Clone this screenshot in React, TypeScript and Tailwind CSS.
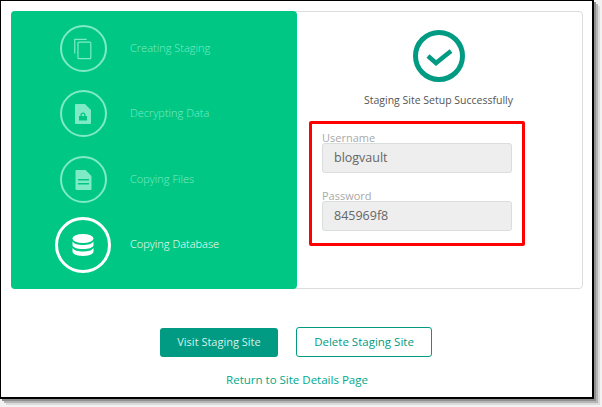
const steps = [
  { label: "Creating Staging", icon: "copy" },
  { label: "Decrypting Data", icon: "lock" },
  { label: "Copying Files", icon: "file" },
  { label: "Copying Database", icon: "database" },
];

function StepIcon({ icon }: { icon: string }) {
  if (icon === "copy") {
    return (
      <svg viewBox="0 0 24 24" className="h-[22px] w-[22px]" fill="none" stroke="currentColor" strokeWidth="1.3">
        <rect x="6.5" y="4.5" width="14" height="18" rx="1" />
        <path d="M3 17V1.5h13" />
      </svg>
    );
  }
  if (icon === "lock") {
    return (
      <svg viewBox="0 0 16 20" className="h-[20px] w-[16px]" fill="currentColor">
        <path fillRule="evenodd" d="M1 0h9l6 6v13a1 1 0 0 1-1 1H1a1 1 0 0 1-1-1V1a1 1 0 0 1 1-1Zm7 8.5a2.5 2.5 0 0 0-2.5 2.5v1H4v4.500h8V12h-1.500v-1A2.500 2.500 0 0 0 8 8.500Zm0 1.300A1.200 1.200 0 0 1 9.200 11v1H6.800v-1A1.200 1.200 0 0 1 8 9.800Z" />
      </svg>
    );
  }
  if (icon === "file") {
    return (
      <svg viewBox="0 0 16 20" className="h-[20px] w-[17px]" fill="currentColor">
        <path fillRule="evenodd" d="M1 0h9l6 6v13a1 1 0 0 1-1 1H1a1 1 0 0 1-1-1V1a1 1 0 0 1 1-1Zm1.500 9v1.500h11V9h-11Zm0 4v1.500h11V13h-11Z" />
      </svg>
    );
  }
  return (
    <svg viewBox="0 0 22 22" className="h-[22px] w-[22px]" fill="currentColor">
      <ellipse cx="11" cy="4.500" rx="10.500" ry="4.500" />
      <path d="M.5 7.500C2 10 6 11 11 11s9-1 10.500-3.500V11c0 2.500-4.700 4-10.500 4S.5 13.500.5 11Z" />
      <path d="M.5 14c1.500 2.500 5.500 3.500 10.500 3.500s9-1 10.500-3.500v3.500c0 2.500-4.700 4.500-10.500 4.500S.5 20 .5 17.500Z" />
    </svg>
  );
}

function Field({ label, value, className }: { label: string; value: string; className: string }) {
  return (
    <div className={className}>
      <div className="-mb-px h-[13px] text-[11px] leading-[13px] text-[#a9a9a9]">{label}</div>
      <div className="flex h-[30px] items-center rounded-[3px] border border-[#d9dddc] bg-[#eeeeee] pt-px pl-[11px] text-[12.500px] text-[#666666]">
        {value}
      </div>
    </div>
  );
}

export default function App() {
  return (
    <div className="h-[407px] w-[602px] overflow-hidden bg-[#f2f2f2] font-['Open_Sans',sans-serif]">
      <div className="h-[399px] w-[594px] border-t border-r-2 border-b-2 border-l border-black bg-white pt-[10px] pl-[10px] shadow-[2px_2px_0_#8f8f8f,4px_4px_0_#b5b5b5,6px_6px_0_#dcdcdc]">
        <div className="flex h-[278px] w-[572px] rounded-[4px] border border-[#dddddd]">
          <div className="-mt-px -ml-px h-[278px] w-[286px] rounded-[4px] bg-[#00c884] pt-[5px]">
            {steps.map((step, i) => {
              const active = i === steps.length - 1;
              return (
                <div
                  key={step.label}
                  className={
                    active
                      ? "flex h-[65px] items-center text-white"
                      : i === 2
                        ? "mt-px flex h-[65px] items-center text-[#7feac6]"
                        : "flex h-[65px] items-center text-[#7feac6]"
                  }
                >
                  <div className="ml-[44px] flex w-[56px] justify-center">
                    <div
                      className={
                        active
                          ? "flex h-[56px] w-[56px] items-center justify-center rounded-full border-[3px] border-white"
                          : "flex h-[47px] w-[47px] items-center justify-center rounded-full border-[2px] border-[#7feac6]"
                      }
                    >
                      <StepIcon icon={step.icon} />
                    </div>
                  </div>
                  <span className="ml-[19px] text-[11px] font-light">{step.label}</span>
                </div>
              );
            })}
          </div>
          <div className="flex flex-1 flex-col items-center pt-[18px] pr-[2px]">
            <svg viewBox="0 0 52 52" className="h-[52px] w-[52px]" fill="none" stroke="#009b82" strokeWidth="5">
              <circle cx="26" cy="26" r="23.500" />
              <path d="M15 26l8 7 15-12" strokeWidth="4.500" />
            </svg>
            <div className="mt-[10px] text-[10.500px] leading-[16px] text-[#555555]">Staging Site Setup Successfully</div>
            <div className="mt-[13px] ml-[12px] h-[125px] w-[216px] self-start rounded-[2px] border-[3px] border-[#ff0000] px-[10px] pt-[7px]">
              <Field label="Username" value="blogvault" className="" />
              <Field label="Password" value="845969f8" className="mt-[16px]" />
            </div>
          </div>
        </div>
        <div className="mt-[38px] flex w-[570px] items-center justify-center gap-[18px]">
          <button className="h-[29px] w-[118px] rounded-[3px] bg-[#009b82] text-[11px] text-[#d5f1eb]">Visit Staging Site</button>
          <button className="h-[30px] w-[136px] rounded-[3px] border border-[#009b82] bg-white text-[11.500px] text-[#009b82]">
            Delete Staging Site
          </button>
        </div>
        <div className="mt-[15px] w-[572px] text-center text-[11.500px] leading-[16px] text-[#00a88c]">Return to Site Details Page</div>
      </div>
    </div>
  );
}
